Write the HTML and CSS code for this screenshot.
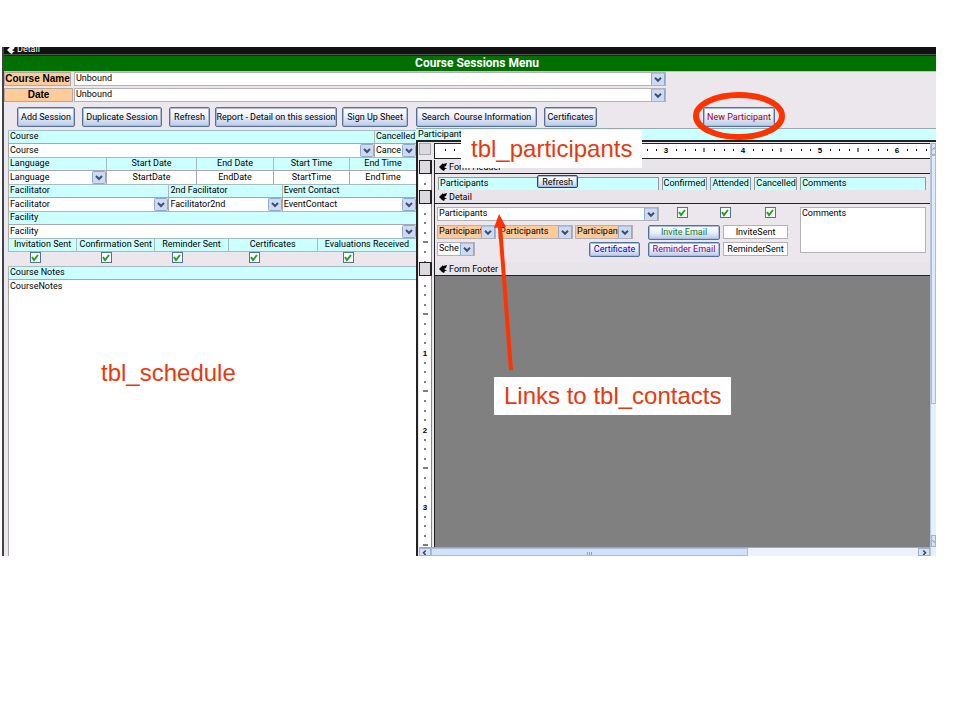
FILE: index.html
```html
<!DOCTYPE html>
<html lang="en">
<head>
<meta charset="UTF-8">
<meta name="viewport" content="width=device-width, initial-scale=1.0">
<title>Course Sessions Menu</title>
<link rel="stylesheet" href="styles.css">
</head>
<body>

<svg class="defs" aria-hidden="true">
<defs>
<symbol id="marker" viewBox="0 0 9 8"><path d="M0 4L4 0V1L8 0L7 3L5 4L8 6L6 6L5 8L3 7Z"/></symbol>
<pattern id="ticksH" width="77" height="14" patternUnits="userSpaceOnUse">
<path d="M10 6h1M19 6h1M29 6h1M48 6h1M58 6h1M67 6h1" stroke="#000" stroke-width="2"/>
<path d="M38 4v4" stroke="#000"/>
</pattern>
<pattern id="ticksV" width="13" height="77" patternUnits="userSpaceOnUse">
<path d="M5 10h2M5 19h2M5 29h2M5 48h2M5 58h2M5 67h2" stroke="#000" stroke-width="1"/>
<path d="M4 38h5" stroke="#000"/>
</pattern>
</defs>
</svg>

<main class="form">
<div class="detail-bar"><svg class="marker"><use href="#marker"/></svg><span>Detail</span></div>
<h1 class="title">Course Sessions Menu</h1>

<div class="lookup">
<label class="lookup-label" for="courseName">Course Name</label>
<select class="drop" id="courseName"><option>Unbound</option></select>
</div>
<div class="lookup lookup-date">
<label class="lookup-label" for="date">Date</label>
<select class="drop" id="date"><option>Unbound</option></select>
</div>

<div class="toolbar">
<button class="btn add">Add Session</button>
<button class="btn duplicate">Duplicate Session</button>
<button class="btn refresh">Refresh</button>
<button class="btn report">Report - Detail on this session</button>
<button class="btn signup">Sign Up Sheet</button>
<button class="btn search">Search&nbsp; Course Information</button>
<button class="btn certs">Certificates</button>
<div class="new-wrap">
<button class="btn new">New Participant</button>
<svg class="ring" viewBox="0 0 92 50"><ellipse cx="46" cy="25" rx="43" ry="21"/></svg>
</div>
</div>

<div class="panes">
<section class="schedule">
<div class="row cols-course heads">
<label for="course">Course</label>
<label for="cancelled">Cancelled</label>
</div>
<div class="row cols-course fields">
<select class="drop" id="course"><option>Course</option></select>
<select class="drop" id="cancelled"><option>Cance</option></select>
</div>
<div class="row cols-lang heads centered">
<label for="language">Language</label>
<label for="startDate">Start Date</label>
<label for="endDate">End Date</label>
<label for="startTime">Start Time</label>
<label for="endTime">End Time</label>
</div>
<div class="row cols-lang fields centered">
<select class="drop" id="language"><option>Language</option></select>
<input id="startDate" value="StartDate">
<input id="endDate" value="EndDate">
<input id="startTime" value="StartTime">
<input id="endTime" value="EndTime">
</div>
<div class="row cols-fac heads">
<label for="facilitator">Facilitator</label>
<label for="facilitator2">2nd Facilitator</label>
<label for="contact">Event Contact</label>
</div>
<div class="row cols-fac fields">
<select class="drop" id="facilitator"><option>Facilitator</option></select>
<select class="drop" id="facilitator2"><option>Facilitator2nd</option></select>
<select class="drop" id="contact"><option>EventContact</option></select>
</div>
<div class="row heads"><label for="facility">Facility</label></div>
<div class="row fields"><select class="drop" id="facility"><option>Facility</option></select></div>
<div class="row cols-sent heads all-centered">
<label for="invitation">Invitation Sent</label>
<label for="confirmation">Confirmation Sent</label>
<label for="reminder">Reminder Sent</label>
<label for="certificates">Certificates</label>
<label for="evaluations">Evaluations Received</label>
</div>
<div class="checks">
<input type="checkbox" id="invitation" checked>
<input type="checkbox" id="confirmation" checked>
<input type="checkbox" id="reminder" checked>
<input type="checkbox" id="certificates" checked>
<input type="checkbox" id="evaluations" checked>
</div>
<div class="row heads"><label for="notes">Course Notes</label></div>
<textarea class="notes" id="notes">CourseNotes</textarea>
<div class="callout schedule-note">tbl_schedule</div>
</section>

<section class="participants">
<h2 class="sub-title">Participants</h2>
<div class="subform">
<div class="canvas">
<div class="strip ruler-strip">
<div class="corner"></div>
<svg class="ruler">
<rect width="100%" height="14" fill="url(#ticksH)"/>
<text x="77" y="9">1</text><text x="154" y="9">2</text><text x="231" y="9">3</text><text x="308" y="9">4</text><text x="385" y="9">5</text><text x="462" y="9">6</text>
</svg>
</div>

<div class="strip">
<div class="grip"></div>
<div class="bar"><svg class="marker"><use href="#marker"/></svg>Form Header</div>
</div>
<div class="strip">
<svg class="vruler"><rect width="13" height="100%" fill="url(#ticksV)"/></svg>
<div class="head-area">
<div class="tag participant-tag"><label for="participant">Participants</label><button class="btn small">Refresh</button></div>
<label class="tag" for="confirmed">Confirmed</label>
<label class="tag" for="attended">Attended</label>
<label class="tag" for="wasCancelled">Cancelled</label>
<label class="tag" for="comments">Comments</label>
</div>
</div>
<div class="strip">
<div class="grip"></div>
<div class="bar"><svg class="marker"><use href="#marker"/></svg>Detail</div>
</div>
<div class="strip">
<svg class="vruler"><rect width="13" height="100%" fill="url(#ticksV)"/></svg>
<div class="detail-area">
<div class="lines">
<div class="line line-one">
<select class="drop" id="participant"><option>Participants</option></select>
<input type="checkbox" id="confirmed" checked>
<input type="checkbox" id="attended" checked>
<input type="checkbox" id="wasCancelled" checked>
</div>
<div class="line line-two">
<select class="drop peach" aria-label="Participant phone"><option>Participants</option></select>
<select class="drop peach" aria-label="Participant email"><option>Participants</option></select>
<select class="drop peach" aria-label="Participant group"><option>Participants</option></select>
<button class="btn small invite">Invite Email</button>
<input class="sent" aria-label="Invite sent" value="InviteSent">
</div>
<div class="line line-three">
<select class="drop" aria-label="Schedule"><option>Sche</option></select>
<button class="btn small certificate">Certificate</button>
<button class="btn small remind">Reminder Email</button>
<input class="sent" aria-label="Reminder sent" value="ReminderSent">
</div>
</div>
<textarea class="comments" id="comments">Comments</textarea>
</div>
</div>
<div class="strip">
<div class="grip"></div>
<div class="bar"><svg class="marker"><use href="#marker"/></svg>Form Footer</div>
</div>
<div class="strip rest">
<svg class="vruler">
<rect width="13" height="100%" fill="url(#ticksV)"/>
<text x="6" y="80">1</text><text x="6" y="157">2</text><text x="6" y="234">3</text>
</svg>
<div class="empty"></div>
</div>
<div class="hscroll">
<svg class="scroll-btn" viewBox="0 0 12 8"><path d="M7 2L4 5L7 8"/></svg>
<div class="hthumb"><i></i><i></i><i></i></div>
<svg class="scroll-btn last" viewBox="0 0 12 8"><path d="M5 2L8 5L5 8"/></svg>
</div>
</div>
<div class="vscroll">
<svg class="vbtn" viewBox="0 0 5 12"><path d="M1 7L4 4L5 5"/></svg>
<div class="vthumb"></div>
<svg class="vbtn last" viewBox="0 0 5 12"><path d="M1 5L4 8L5 7"/></svg>
</div>
</div>

<div class="callout box participants-note">tbl_participants</div>
<div class="callout box contacts-note">Links to tbl_contacts</div>
<svg class="pointer" viewBox="0 0 24 160"><path d="M18 156L7 12" stroke="#ff3300" stroke-width="4"/><path d="M6 0L13 13L1 14Z" fill="#ff3300"/></svg>
</section>
</div>
</main>

</body>
</html>
```
FILE: styles.css
```css
* {
box-sizing: border-box;
}
body {
margin: 0;
background: #fff;
font-family: Roboto, "Liberation Sans", sans-serif;
font-size: 9px;
line-height: 12px;
color: #000;
}
button, input, select, textarea {
margin: 0;
font: inherit;
color: inherit;
border-radius: 0;
}
.defs {
display: block;
width: 0;
height: 0;
}
.form {
margin: 47px 24px 0 2px;
border-left: 2px solid #44424a;
background: #ebe7ec;
}
.marker {
flex: none;
width: 9px;
height: 8px;
margin-right: 1px;
}
.detail-bar {
display: flex;
align-items: flex-end;
height: 8px;
overflow: hidden;
padding-left: 3px;
background: #111;
border-bottom: 1px solid #555;
color: #fff;
line-height: 9px;
}
.detail-bar .marker {
fill: #fff;
}
.title {
margin: 0;
height: 17px;
background: #007100;
border-top: 1px solid #043604;
border-bottom: 1px solid #b8c8b8;
color: #fff;
font-size: 12px;
font-weight: bold;
line-height: 15px;
text-align: center;
padding-left: 14px;
}

/* lookups */
.lookup {
display: grid;
grid-template-columns: 67px 1fr;
column-gap: 3px;
width: 71%;
height: 14px;
}
.lookup-date {
grid-template-columns: 69px 1fr;
column-gap: 1px;
margin-top: 2px;
}
.lookup-label {
background: #ffcc99;
border: 1px solid #b5a5a0;
font: bold 10px/12px "Liberation Sans", Arial, sans-serif;
text-align: center;
white-space: nowrap;
}
.drop {
appearance: none;
display: block;
width: 100%;
min-width: 0;
height: 14px;
padding: 0 14px 1px 1px;
border: 1px solid #b4b0b6;
background: #fff url("data:image/svg+xml,%3Csvg xmlns='http://www.w3.org/2000/svg' width='14' height='13'%3E%3Crect x='.5' y='.5' width='13' height='12' rx='1' fill='%23ccdaf4' stroke='%2392a8cc'/%3E%3Cpath d='M4 5l3 3 3-3' fill='none' stroke='%23404f70' stroke-width='2'/%3E%3C/svg%3E") no-repeat right center;
line-height: 11px;
}

/* buttons */
.toolbar {
display: flex;
align-items: flex-start;
height: 21px;
margin-top: 5px;
padding-left: 13px;
}
.btn {
height: 20px;
padding: 0;
border: 1px solid #53709f;
border-radius: 2px;
background: linear-gradient(#fff, #eef1fa 45%, #b9c9e8);
box-shadow: inset 0 0 0 1px #a9bce0;
line-height: 16px;
white-space: nowrap;
}
.add {
width: 58px;
margin-right: 7px;
}
.duplicate {
width: 80px;
margin-right: 7px;
}
.refresh {
width: 41px;
margin-right: 5px;
}
.report {
width: 122px;
margin-right: 5px;
}
.signup {
width: 66px;
margin-right: 8px;
}
.search {
width: 121px;
margin-right: 7px;
}
.certs {
width: 53px;
}
.new-wrap {
position: relative;
margin-left: 106px;
}
.new {
width: 72px;
color: #a00010;
}
.ring {
position: absolute;
z-index: 2;
left: -10px;
top: -16px;
width: 92px;
height: 50px;
fill: none;
stroke: #ff3300;
stroke-width: 6;
pointer-events: none;
}

/* schedule pane */
.panes {
display: grid;
grid-template-columns: 412fr 520fr;
}
.schedule {
position: relative;
padding: 2px 0 0 4px;
}
.row {
display: grid;
background: #fff;
}
.cols-course {
grid-template-columns: 365fr 42fr;
}
.cols-lang {
grid-template-columns: 98fr 90fr 77fr 76fr 67fr;
}
.cols-fac {
grid-template-columns: 160fr 113fr 134fr;
}
.cols-sent {
grid-template-columns: 68fr 78fr 73fr 89fr 99fr;
}
.heads {
background: #ccffff;
}
.heads label {
height: 13px;
padding-left: 1px;
border: solid #a3bcc0;
border-width: 1px 0 0 1px;
line-height: 11px;
white-space: nowrap;
}
.fields .drop, .fields input {
width: 100%;
min-width: 0;
height: 14px;
border: solid #a8a8ac;
border-width: 1px 0 0 1px;
}
.fields input {
padding: 0 0 1px;
}
.centered label + label, .centered input, .all-centered label {
padding-left: 0;
text-align: center;
}
.checks {
display: grid;
grid-template-columns: 71fr 71fr 76fr 94fr 73fr;
padding-left: 22px;
height: 15px;
border-top: 1px solid #a3bcc0;
}
input[type="checkbox"] {
appearance: none;
width: 11px;
height: 11px;
border: 1px solid #4f7593;
background: #fff url("data:image/svg+xml,%3Csvg xmlns='http://www.w3.org/2000/svg' width='9' height='9'%3E%3Cpath d='M1 4l2 3 4-5' fill='none' stroke='%2321a121' stroke-width='2'/%3E%3C/svg%3E") no-repeat center;
}
.notes {
display: block;
width: 100%;
height: 277px;
padding: 0 1px;
border: solid #a8a8ac;
border-width: 1px 0 0 1px;
background: #fff;
resize: none;
}

/* participants subform */
.participants {
position: relative;
display: flex;
flex-direction: column;
}
.sub-title {
margin: 0;
height: 12px;
padding-left: 2px;
background: #ccffff;
border-top: 1px solid #9aa;
font-size: 9px;
font-weight: normal;
line-height: 11px;
}
.subform {
flex: 1;
display: flex;
border-top: 2px solid #222;
border-left: 2px solid #222;
padding-left: 1px;
}
.canvas {
flex: 1;
min-width: 0;
display: flex;
flex-direction: column;
}
.strip {
display: grid;
grid-template-columns: 13px 1fr;
column-gap: 2px;
}
.corner {
width: 12px;
height: 12px;
border: 1px solid #aaa;
background: #dcdadf;
}
.ruler-strip {
padding: 1px 0;
}
.ruler {
width: 100%;
height: 16px;
border: solid #222;
border-width: 1px 0 1px 1px;
background: #fff;
}
.ruler text, .vruler text {
font: bold 8px "Liberation Sans", Arial, sans-serif;
text-anchor: middle;
}
/* zero height keeps the svg from stretching its strip */
.vruler {
width: 13px;
height: 0;
min-height: 100%;
background: #fff;
border-right: 1px solid #888;
}
.grip {
border: solid #222;
border-width: 1px 2px 1px 1px;
background: #dcdadf;
}
.bar {
display: flex;
align-items: center;
height: 14px;
padding-left: 4px;
border-left: 1px solid #222;
border-bottom: 1px solid #222;
background: #e8e5ea;
}
.head-area {
display: grid;
grid-template-columns: 221fr 46fr 41fr 43fr 126fr;
column-gap: 3px;
height: 16px;
padding: 3px 4px 0 3px;
border-left: 1px solid #222;
}
.tag {
min-width: 0;
padding-left: 1px;
border: solid #8a9a9c;
border-width: 1px 1px 0 1px;
background: #ccffff;
line-height: 11px;
white-space: nowrap;
}
.participant-tag {
display: grid;
grid-template-columns: 98fr 42fr 80fr;
}
.small {
height: 15px;
line-height: 12px;
}
.participant-tag .small {
height: 13px;
margin-top: -3px;
border-color: #33415f;
line-height: 10px;
}
.detail-area {
display: grid;
grid-template-columns: 363fr 126fr;
height: 58px;
padding: 3px 4px 0 2px;
border-left: 1px solid #222;
}
.lines {
display: grid;
align-content: start;
row-gap: 1px;
}
.line {
display: grid;
align-items: center;
height: 16px;
}
.line-one {
grid-template-columns: 240fr 43fr 45fr 35fr;
align-items: start;
}
.line-one .drop {
width: 222px;
}
.line-two {
grid-template-columns: 59px 75px 58px 72px 65px;
column-gap: 2px;
}
.line-two .invite {
margin-left: 13px;
width: 72px;
}
.line-two .sent {
margin-left: 14px;
}
.line-three {
grid-template-columns: 152px 59px 75px 65px;
}
.line-three .drop {
width: 38px;
}
.peach {
background-color: #ffcc99;
}
.invite {
color: #1a7a1a;
}
.certificate {
width: 51px;
color: #0000e0;
}
.remind {
width: 72px;
color: #800080;
}
.sent {
width: 65px;
height: 14px;
padding: 0;
border: 1px solid #b4b0b6;
background: #fff;
text-align: center;
}
.comments {
display: block;
width: 100%;
height: 46px;
padding: 0 1px;
border: 1px solid #b4b0b6;
background: #fff;
line-height: 11px;
resize: none;
}
.rest {
flex: 1;
}
.empty {
background: #808080;
border-left: 1px solid #222;
}

/* scroll bars */
.hscroll {
display: flex;
height: 9px;
background: #eaf2fd;
border-top: 1px solid #9ab;
}
.scroll-btn, .vbtn {
flex: none;
width: 12px;
height: 8px;
border: 1px solid #9eb2d4;
background: #d6e2f8;
fill: none;
stroke: #33415f;
stroke-width: 2;
}
.last {
margin-left: auto;
}
.hthumb {
display: flex;
justify-content: center;
align-items: flex-end;
gap: 1px;
width: 62%;
border: 1px solid #a9bce0;
background: #d3e1fa;
}
.hthumb i {
width: 1px;
height: 3px;
background: #8ba3cc;
}
.vscroll {
display: flex;
flex-direction: column;
width: 6px;
margin-top: 1px;
background: #e6f0fc;
border-left: 1px solid #b9c5d8;
}
.vbtn {
width: 5px;
height: 12px;
stroke-width: 1;
}
.vthumb {
height: 249px;
border: 1px solid #a9bce0;
background: #dfebfd;
}
.vscroll .last {
margin: auto 0 9px;
}

/* annotations */
.callout {
position: absolute;
z-index: 3;
color: #e8380d;
font: 24px/28px "Liberation Sans", Arial, sans-serif;
white-space: nowrap;
}
.schedule-note {
left: 97px;
top: 231px;
}
.box {
background: #fff;
padding: 5px 10px;
}
.participants-note {
left: 45px;
top: 2px;
}
.contacts-note {
left: 78px;
top: 249px;
}
.pointer {
position: absolute;
z-index: 3;
left: 77px;
top: 86px;
width: 24px;
height: 160px;
}
```
